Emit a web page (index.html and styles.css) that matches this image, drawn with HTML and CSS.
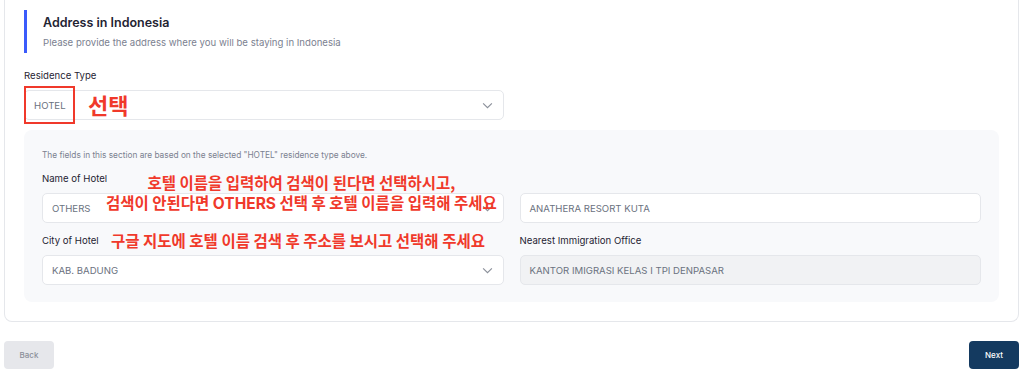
FILE: index.html
```html
<!DOCTYPE html>
<html>
  <head>
    <title>Address in Indonesia</title>
    <link rel="stylesheet" href="styles.css">
  </head>
  <body>
    <div class="card">
      <!-- 섹션 제목 -->
      <div class="section-head">
        <h2>Address in Indonesia</h2>
        <p>Please provide the address where you will be staying in Indonesia</p>
      </div>

      <div class="grid">
        <div class="field">
          <label>Residence Type</label>
          <div class="control select">
            <span>HOTEL</span>
            <svg class="chev" viewBox="0 0 12 8"><path d="M1 1.5l5 5 5-5"/></svg>
            <div class="mark-box"></div>
            <div class="note note-big">선택</div>
          </div>
        </div>
      </div>

      <!-- 숙소 유형에 따른 필드 -->
      <div class="sub">
        <p class="sub-info">The fields in this section are based on the selected "HOTEL" residence type above.</p>
        <div class="grid">
          <div class="field">
            <label>Name of Hotel</label>
            <div class="control select">
              <span>OTHERS</span>
              <svg class="chev" viewBox="0 0 12 8"><path d="M1 1.5l5 5 5-5"/></svg>
            </div>
          </div>
          <div class="field">
            <label class="blank">&nbsp;</label>
            <div class="control"><span>ANATHERA RESORT KUTA</span></div>
          </div>
          <div class="field">
            <label>City of Hotel</label>
            <div class="control select">
              <span>KAB. BADUNG</span>
              <svg class="chev" viewBox="0 0 12 8"><path d="M1 1.5l5 5 5-5"/></svg>
            </div>
          </div>
          <div class="field">
            <label>Nearest Immigration Office</label>
            <div class="control disabled"><span>KANTOR IMIGRASI KELAS I TPI DENPASAR</span></div>
          </div>
        </div>
        <div class="note note-hotel">호텔 이름을 입력하여 검색이 된다면 선택하시고,<br>검색이 안된다면 <b>OTHERS</b> 선택 후 호텔 이름을 입력해 주세요</div>
        <div class="note note-city">구글 지도에 호텔 이름 검색 후 주소를 보시고 선택해 주세요</div>
      </div>
    </div>

    <div class="actions">
      <button class="btn back">Back</button>
      <button class="btn next">Next</button>
    </div>
  </body>
</html>
```

FILE: styles.css
```css
* {
  box-sizing: border-box;
}
body {
  margin: 0;
  padding: 0 5px 0 4px;
  background: #fff;
  font-family: Inter, "Noto Sans", sans-serif;
  color: #1f2937;
}
.card {
  border: 1px solid #e5e7eb;
  border-top: none;
  border-radius: 0 0 8px 8px;
  padding: 10px 19px 19px 19px;
}
.section-head {
  border-left: 3px solid #3b5bfb;
  padding: 5px 0 0 16px;
  height: 43px;
}
.section-head h2 {
  margin: 0;
  font-size: 12.5px;
  font-weight: 600;
  line-height: 15px;
  color: #1f2433;
}
.section-head p {
  margin: 6px 0 0;
  font-size: 9.6px;
  line-height: 14px;
  color: #7b8190;
}
.grid {
  display: grid;
  grid-template-columns: 1fr 1fr;
  column-gap: 16px;
  row-gap: 11px;
}
.card > .grid {
  margin-top: 16px;
}
.field label {
  display: block;
  font-size: 9.6px;
  line-height: 14px;
  color: #1f2433;
  margin-bottom: 7px;
}
.control {
  position: relative;
  height: 30px;
  border: 1px solid #e5e7eb;
  border-radius: 5px;
  background: #fff;
  display: flex;
  align-items: center;
  padding: 0 10px 0 9px;
  font-size: 9.6px;
  color: #6b7280;
}
.control.disabled {
  background: #f1f2f4;
}
.chev {
  margin-left: auto;
  width: 11px;
  height: 7px;
  fill: none;
  stroke: #8b909a;
  stroke-width: 1.3;
}
.sub {
  position: relative;
  margin-top: 10px;
  background: #f8f9fb;
  border-radius: 8px;
  padding: 18px 18px 17px;
}
.sub-info {
  margin: 0 0 10px;
  font-size: 8.3px;
  line-height: 14px;
  color: #7b8190;
}
/* 빨간 안내 표시 */
.mark-box {
  position: absolute;
  left: -1px;
  top: -5px;
  width: 51px;
  height: 38px;
  border: 2px solid #f0392b;
}
.note {
  position: absolute;
  color: #f0392b;
  font-family: "Noto Sans CJK KR", sans-serif;
  font-weight: 700;
  white-space: nowrap;
}
.note-big {
  left: 63px;
  top: -1px;
  font-size: 22px;
  line-height: 28px;
}
.note-hotel {
  left: 82px;
  top: 42px;
  font-size: 15.5px;
  line-height: 20px;
  text-align: center;
}
.note-hotel b {
  font-family: Inter, sans-serif;
  font-weight: 700;
}
.note-city {
  left: 87px;
  top: 100px;
  font-size: 15.5px;
  line-height: 20px;
}
.actions {
  display: flex;
  justify-content: space-between;
  margin-top: 19px;
}
.btn {
  height: 28px;
  width: 50px;
  border: none;
  border-radius: 4px;
  font-family: Inter, sans-serif;
  font-size: 8px;
  font-weight: 500;
}
.btn.back {
  background: #e6e7eb;
  color: #8b909a;
}
.btn.next {
  background: #143a60;
  color: #fff;
}
```
